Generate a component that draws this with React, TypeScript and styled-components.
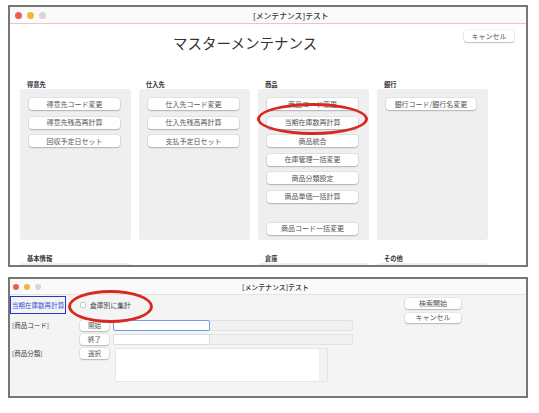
import React from 'react'
import styled, { createGlobalStyle } from 'styled-components'

const GlobalStyle = createGlobalStyle`
  html, body {
    margin: 0;
    padding: 0;
    background: #fff;
  }
  body {
    font-family: "Noto Sans CJK JP", "Noto Sans", sans-serif;
    color: #333;
  }
`

const Page = styled.div`
  width: 539px;
  height: 413px;
  box-sizing: border-box;
  padding: 5px 0 0 8px;
  display: flex;
  flex-direction: column;
  gap: 10px;
`

const Window = styled.div<{ $height: number }>`
  position: relative;
  width: 520px;
  height: ${p => p.$height}px;
  box-sizing: border-box;
  border: 2px solid #777;
  background: #fff;
  display: flex;
  flex-direction: column;
  overflow: hidden;
`

const TitleBar = styled.div<{ $height: number; $line: string; $pad: number }>`
  flex: none;
  height: ${p => p.$height}px;
  display: flex;
  align-items: center;
  padding-left: ${p => p.$pad}px;
  background: #fafafa;
  border-bottom: 1px solid ${p => p.$line};
`

const Lights = styled.div<{ $gap: number }>`
  display: flex;
  gap: ${p => p.$gap}px;
`

const Light = styled.span<{ $color: string; $size: number }>`
  width: ${p => p.$size}px;
  height: ${p => p.$size}px;
  border-radius: 50%;
  background: ${p => p.$color};
`

const WindowTitle = styled.span<{ $offset: number; $size: number }>`
  margin-left: ${p => p.$offset}px;
  font-size: ${p => p.$size}px;
  font-weight: 500;
  color: #333;
  white-space: nowrap;
`

const Button = styled.button<{ $w: number; $h?: number }>`
  flex: none;
  width: ${p => p.$w}px;
  height: ${p => p.$h ?? 12}px;
  padding: 0;
  border: none;
  border-radius: 3px;
  background: #fff;
  box-shadow: 0 0 0 0.5px rgba(0, 0, 0, 0.1), 0 1px 1.5px rgba(0, 0, 0, 0.22);
  font-family: inherit;
  font-size: 7px;
  line-height: 1;
  color: #555;
  display: flex;
  align-items: center;
  justify-content: center;
  white-space: nowrap;
`

const Ring = styled.div<{ $x: number; $y: number; $w: number; $h: number }>`
  position: absolute;
  left: ${p => p.$x}px;
  top: ${p => p.$y}px;
  width: ${p => p.$w}px;
  height: ${p => p.$h}px;
  box-sizing: border-box;
  border: 3px solid #d8281f;
  border-radius: 50%;
  pointer-events: none;
`

/* ---- master window ---- */

const MasterBody = styled.div`
  flex: 1;
  display: flex;
  flex-direction: column;
  padding-top: 6px;
`

const HeaderRow = styled.div`
  display: flex;
  align-items: flex-start;
  height: 26px;
`

const Heading = styled.h1`
  margin: 0 0 0 163px;
  font-size: 14.5px;
  font-weight: 400;
  line-height: 26px;
  color: #333;
  white-space: nowrap;
`

const HeaderCancel = styled(Button)`
  margin-left: auto;
  margin-right: 12px;
`

const SectionGrid = styled.div`
  display: grid;
  grid-template-columns: repeat(4, 111px);
  column-gap: 8px;
  row-gap: 15px;
  padding: 25px 0 0 10px;
`

const Section = styled.section`
  display: flex;
  flex-direction: column;
`

const SectionLabel = styled.div`
  height: 8px;
  line-height: 8px;
  padding-left: 7px;
  font-size: 6.3px;
  font-weight: 700;
  color: #333;
  white-space: nowrap;
`

const Panel = styled.div<{ $height: number }>`
  position: relative;
  height: ${p => p.$height}px;
  box-sizing: border-box;
  padding: 9px 0 0 9px;
  background: #efefef;
  border-radius: 3px;
  display: flex;
  flex-direction: column;
  gap: 6.6px;
`

const SpacedButton = styled(Button)`
  margin-top: 13px;
`

/* ---- search window ---- */

const ToolBody = styled.div`
  flex: 1;
  display: flex;
  background: #f4f4f4;
`

const ToolMain = styled.div`
  flex: 1;
  display: flex;
  flex-direction: column;
  padding-top: 1px;
`

const ToolSide = styled.div`
  width: 56px;
  margin-right: 65px;
  padding-top: 3px;
  display: flex;
  flex-direction: column;
  gap: 4px;
`

const OptionRow = styled.div`
  display: flex;
  align-items: center;
  height: 18px;
`

const ModeTag = styled.div`
  width: 56px;
  height: 18px;
  box-sizing: border-box;
  border: 1.5px solid #2c34c8;
  color: #3a56d8;
  font-size: 6.6px;
  display: flex;
  align-items: center;
  justify-content: center;
  white-space: nowrap;
`

const CheckOption = styled.label`
  margin-left: 14px;
  display: flex;
  align-items: center;
  gap: 4px;
  font-size: 6.8px;
  color: #444;
  white-space: nowrap;
`

const CheckBox = styled.span`
  width: 6px;
  height: 6px;
  box-sizing: border-box;
  border: 1px solid #c4c4c4;
  border-radius: 1.5px;
  background: #fff;
`

const FormGrid = styled.div`
  margin-top: 6px;
  display: grid;
  grid-template-columns: 70px 33px 1fr;
  grid-template-rows: 11px 11px 34px;
  row-gap: 3px;
  align-items: start;
`

const FieldLabel = styled.div`
  padding-left: 2px;
  font-size: 6.5px;
  line-height: 10px;
  color: #444;
  white-space: nowrap;
`

const SmallButton = styled(Button)`
  font-size: 6.5px;
`

const FieldTrack = styled.div`
  width: 240px;
  height: 11px;
  box-sizing: border-box;
  border: 1px solid #e2e2e2;
  border-radius: 2px;
  background: #f1f1f1;
  display: flex;
`

const TextField = styled.input<{ $focused?: boolean }>`
  width: 97px;
  height: 11px;
  margin: -1px 0 0 -1px;
  box-sizing: border-box;
  padding: 0;
  background: #fff;
  border: ${p => (p.$focused ? '1.5px solid #6f9be8' : '1px solid #dcdcdc')};
  border-radius: 2px;
  outline: none;
`

const AreaTrack = styled.div`
  margin-left: 2px;
  width: 213px;
  height: 34px;
  box-sizing: border-box;
  border: 1px solid #e6e6e6;
  background: #f2f2f2;
  display: flex;
`

const AreaField = styled.textarea`
  width: 203px;
  height: 32px;
  box-sizing: border-box;
  margin: 0;
  padding: 0;
  border: none;
  background: #fff;
  resize: none;
  outline: none;
`

const groups = [
  { label: '得意先', buttons: ['得意先コード変更', '得意先残高再計算', '回収予定日セット'] },
  { label: '仕入先', buttons: ['仕入先コード変更', '仕入先残高再計算', '支払予定日セット'] },
]

const productButtons = ['商品コード変更', '当期在庫数再計算', '商品統合', '在庫管理一括変更', '商品分類設定', '商品単価一括計算']

export default function App() {
  return (
    <>
      <GlobalStyle />
      <Page>
        <Window $height={262}>
          <TitleBar $height={16} $line="#f0c4c4" $pad={5}>
            <Lights $gap={5}>
              <Light $color="#ec5f57" $size={7} />
              <Light $color="#f2b53c" $size={7} />
              <Light $color="#d6d6d6" $size={7} />
            </Lights>
            <WindowTitle $offset={207} $size={7.8}>[メンテナンス]テスト</WindowTitle>
          </TitleBar>
          <MasterBody>
            <HeaderRow>
              <Heading>マスターメンテナンス</Heading>
              <HeaderCancel $w={50}>キャンセル</HeaderCancel>
            </HeaderRow>
            <SectionGrid>
              {groups.map(g => (
                <Section key={g.label}>
                  <SectionLabel>{g.label}</SectionLabel>
                  <Panel $height={151}>
                    {g.buttons.map(b => (
                      <Button key={b} $w={91}>{b}</Button>
                    ))}
                  </Panel>
                </Section>
              ))}
              <Section>
                <SectionLabel>商品</SectionLabel>
                <Panel $height={151}>
                  {productButtons.map(b => (
                    <Button key={b} $w={91}>{b}</Button>
                  ))}
                  <SpacedButton $w={91}>商品コード一括変更</SpacedButton>
                  <Ring $x={-1} $y={14} $w={111} $h={32} />
                </Panel>
              </Section>
              <Section>
                <SectionLabel>銀行</SectionLabel>
                <Panel $height={151}>
                  <Button $w={90}>銀行コード/銀行名変更</Button>
                </Panel>
              </Section>
              <Section>
                <SectionLabel>基本情報</SectionLabel>
                <Panel $height={40} />
              </Section>
              <Section />
              <Section>
                <SectionLabel>倉庫</SectionLabel>
                <Panel $height={40} />
              </Section>
              <Section>
                <SectionLabel>その他</SectionLabel>
                <Panel $height={40} />
              </Section>
            </SectionGrid>
          </MasterBody>
        </Window>

        <Window $height={121}>
          <TitleBar $height={15} $line="#e4e4e4" $pad={3}>
            <Lights $gap={5}>
              <Light $color="#ec5f57" $size={6} />
              <Light $color="#f2b53c" $size={6} />
              <Light $color="#d6d6d6" $size={6} />
            </Lights>
            <WindowTitle $offset={201} $size={6.9}>[メンテナンス]テスト</WindowTitle>
          </TitleBar>
          <ToolBody>
            <ToolMain>
              <OptionRow>
                <ModeTag>当期在庫数再計算</ModeTag>
                <CheckOption>
                  <CheckBox />
                  倉庫別に集計
                </CheckOption>
              </OptionRow>
              <FormGrid>
                <FieldLabel>[商品コード]</FieldLabel>
                <SmallButton $w={29} $h={11}>開始</SmallButton>
                <FieldTrack>
                  <TextField $focused readOnly />
                </FieldTrack>
                <FieldLabel />
                <SmallButton $w={29} $h={11}>終了</SmallButton>
                <FieldTrack>
                  <TextField readOnly />
                </FieldTrack>
                <FieldLabel>[商品分類]</FieldLabel>
                <SmallButton $w={29} $h={11}>選択</SmallButton>
                <AreaTrack>
                  <AreaField readOnly />
                </AreaTrack>
              </FormGrid>
            </ToolMain>
            <ToolSide>
              <Button $w={56} $h={10.5}>検索開始</Button>
              <Button $w={56} $h={10.5}>キャンセル</Button>
            </ToolSide>
          </ToolBody>
          <Ring $x={58} $y={11} $w={85} $h={33} />
        </Window>
      </Page>
    </>
  )
}
